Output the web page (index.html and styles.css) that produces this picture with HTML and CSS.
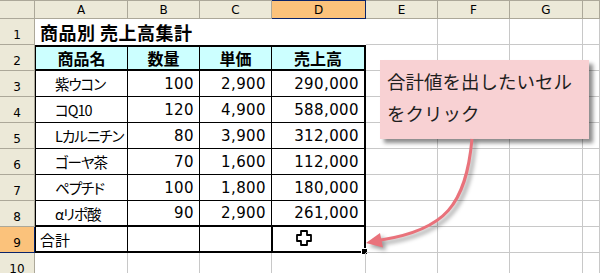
FILE: index.html
```html
<!DOCTYPE html>
<html lang="ja">
<head>
  <meta charset="UTF-8">
  <title>商品別 売上高集計</title>
  <link rel="stylesheet" href="styles.css">
</head>
<body>
  <div class="sheet">
    <!-- 列見出し -->
    <div class="hd corner"></div>
    <div class="hd col">A</div>
    <div class="hd col">B</div>
    <div class="hd col">C</div>
    <div class="hd col sel">D</div>
    <div class="hd col">E</div>
    <div class="hd col">F</div>
    <div class="hd col">G</div>
    <div class="hd col"></div>

    <!-- 1 -->
    <div class="hd row">1</div>
    <div class="c title">商品別 売上高集計</div>
    <div class="c"></div><div class="c"></div><div class="c"></div><div class="c"></div>

    <!-- 2 -->
    <div class="hd row">2</div>
    <div class="c t th a">商品名</div>
    <div class="c t th">数量</div>
    <div class="c t th">単価</div>
    <div class="c t th d">売上高</div>
    <div class="c"></div><div class="c"></div><div class="c"></div><div class="c"></div>

    <!-- 3 -->
    <div class="hd row">3</div>
    <div class="c t a name">紫ウコン</div>
    <div class="c t num">100</div>
    <div class="c t num">2,900</div>
    <div class="c t d num">290,000</div>
    <div class="c"></div><div class="c"></div><div class="c"></div><div class="c"></div>

    <!-- 4 -->
    <div class="hd row">4</div>
    <div class="c t a name">コQ10</div>
    <div class="c t num">120</div>
    <div class="c t num">4,900</div>
    <div class="c t d num">588,000</div>
    <div class="c"></div><div class="c"></div><div class="c"></div><div class="c"></div>

    <!-- 5 -->
    <div class="hd row">5</div>
    <div class="c t a name">Lカルニチン</div>
    <div class="c t num">80</div>
    <div class="c t num">3,900</div>
    <div class="c t d num">312,000</div>
    <div class="c"></div><div class="c"></div><div class="c"></div><div class="c"></div>

    <!-- 6 -->
    <div class="hd row">6</div>
    <div class="c t a name">ゴーヤ茶</div>
    <div class="c t num">70</div>
    <div class="c t num">1,600</div>
    <div class="c t d num">112,000</div>
    <div class="c"></div><div class="c"></div><div class="c"></div><div class="c"></div>

    <!-- 7 -->
    <div class="hd row">7</div>
    <div class="c t a name">ペプチド</div>
    <div class="c t num">100</div>
    <div class="c t num">1,800</div>
    <div class="c t d num">180,000</div>
    <div class="c"></div><div class="c"></div><div class="c"></div><div class="c"></div>

    <!-- 8 -->
    <div class="hd row">8</div>
    <div class="c t a last name">αリポ酸</div>
    <div class="c t last num">90</div>
    <div class="c t last num">2,900</div>
    <div class="c t d last num">261,000</div>
    <div class="c"></div><div class="c"></div><div class="c"></div><div class="c"></div>

    <!-- 9 合計行 -->
    <div class="hd row sel">9</div>
    <div class="c t a total label">合計</div>
    <div class="c t total"></div>
    <div class="c t total"></div>
    <div class="c active">
      <svg class="cursor" width="16" height="16" viewBox="0 0 16 16">
        <path d="M5 1h6v4h4v6h-4v4h-6v-4h-4v-6h4z" fill="#fff" stroke="#000" stroke-width="1.8" stroke-linejoin="round"/>
      </svg>
    </div>
    <div class="c"></div><div class="c"></div><div class="c"></div><div class="c"></div>

    <!-- 10 -->
    <div class="hd row">10</div>
    <div class="c"></div><div class="c"></div><div class="c"></div><div class="c"></div>
    <div class="c"></div><div class="c"></div><div class="c"></div><div class="c"></div>
  </div>

  <!-- 吹き出しと矢印 -->
  <div class="callout">合計値を出したいセル<br>をクリック</div>
  <svg class="arrow" width="600" height="273" viewBox="0 0 600 273">
    <g class="arrow-line">
      <path d="M472 139 C466 205 445 230 381 240" fill="none" stroke="#e9727b" stroke-width="3"/>
      <polygon points="366,243 383,247.5 380,233" fill="#e9727b"/>
    </g>
  </svg>
</body>
</html>
```

FILE: styles.css
```css
* {
  margin: 0;
  padding: 0;
  box-sizing: border-box;
}
body {
  width: 600px;
  height: 273px;
  overflow: hidden;
  background: #fff;
  position: relative;
  font-family: "Noto Sans CJK JP", sans-serif;
  color: #000;
}
.sheet {
  display: grid;
  grid-template-columns: 35px 93px 72px 72px 94px 72px 72px 73px 17px;
  grid-template-rows: 19px repeat(10, 26px);
}

/* 見出しセル */
.hd {
  background: #ece9d8;
  border-right: 1px solid #aca899;
  border-bottom: 1px solid #aca899;
  font-family: "DejaVu Sans", sans-serif;
  font-size: 12px;
  color: #000;
  display: flex;
  justify-content: center;
}
.hd.col {
  align-items: center;
  border-top: 1px solid #aca899;
}
.hd.corner {
  border-top: 1px solid #aca899;
}
.hd.row {
  align-items: flex-end;
  padding-bottom: 2px;
}
.hd.sel {
  background: #fbc27b;
  border-color: #0a246a;
}

/* 通常セル */
.c {
  border-right: 1px solid #c8c8c8;
  border-bottom: 1px solid #c8c8c8;
  display: flex;
  align-items: center;
  font-size: 14px;
  white-space: nowrap;
  position: relative;
}
.title {
  grid-column: span 4;
  border-right: none;
  border-bottom: none;
  padding-left: 5px;
  font-size: 18px;
  font-weight: bold;
  letter-spacing: 0.5px;
}

/* 表の罫線 */
.t {
  border-right-color: #000;
  border-bottom-color: #000;
}
.a {
  border-left: 1px solid #000;
}
.d {
  border-right: 2px solid #000;
}
.th {
  background: #ccffff;
  border-top: 2px solid #000;
  border-bottom: 2px solid #000;
  justify-content: center;
  font-size: 16px;
  font-weight: bold;
}
.last,
.total {
  border-bottom: 2px solid #000;
}
.name {
  padding-left: 19px;
  font-size: 14.5px;
  letter-spacing: -1px;
  font-feature-settings: "palt";
}
.num {
  justify-content: flex-end;
  padding-right: 5px;
  font-family: "DejaVu Sans", sans-serif;
  font-size: 15px;
  letter-spacing: 0.4px;
}
.label {
  padding-left: 4px;
  font-size: 15px;
}

/* 選択中のセル */
.active {
  border-left: 1px solid #000;
  border-right: 2px solid #000;
  border-bottom: 2px solid #000;
}
.active::after {
  content: "";
  position: absolute;
  right: -4px;
  bottom: -4px;
  width: 5px;
  height: 5px;
  background: #000;
  border: 1px solid #fff;
}
.cursor {
  position: absolute;
  left: 23px;
  top: 3px;
}

/* 吹き出し */
.callout {
  position: absolute;
  left: 380px;
  top: 60px;
  width: 209px;
  height: 79px;
  background: #f8d1d3;
  box-shadow: 4px 4px 4px rgba(0, 0, 0, 0.45);
  padding: 5px 0 0 7px;
  font-size: 18.5px;
  line-height: 32px;
  color: #1e1e1e;
  white-space: nowrap;
}
.arrow {
  position: absolute;
  left: 0;
  top: 0;
  pointer-events: none;
}
.arrow-line {
  filter: drop-shadow(3px 3px 2px rgba(0, 0, 0, 0.4));
}
```
